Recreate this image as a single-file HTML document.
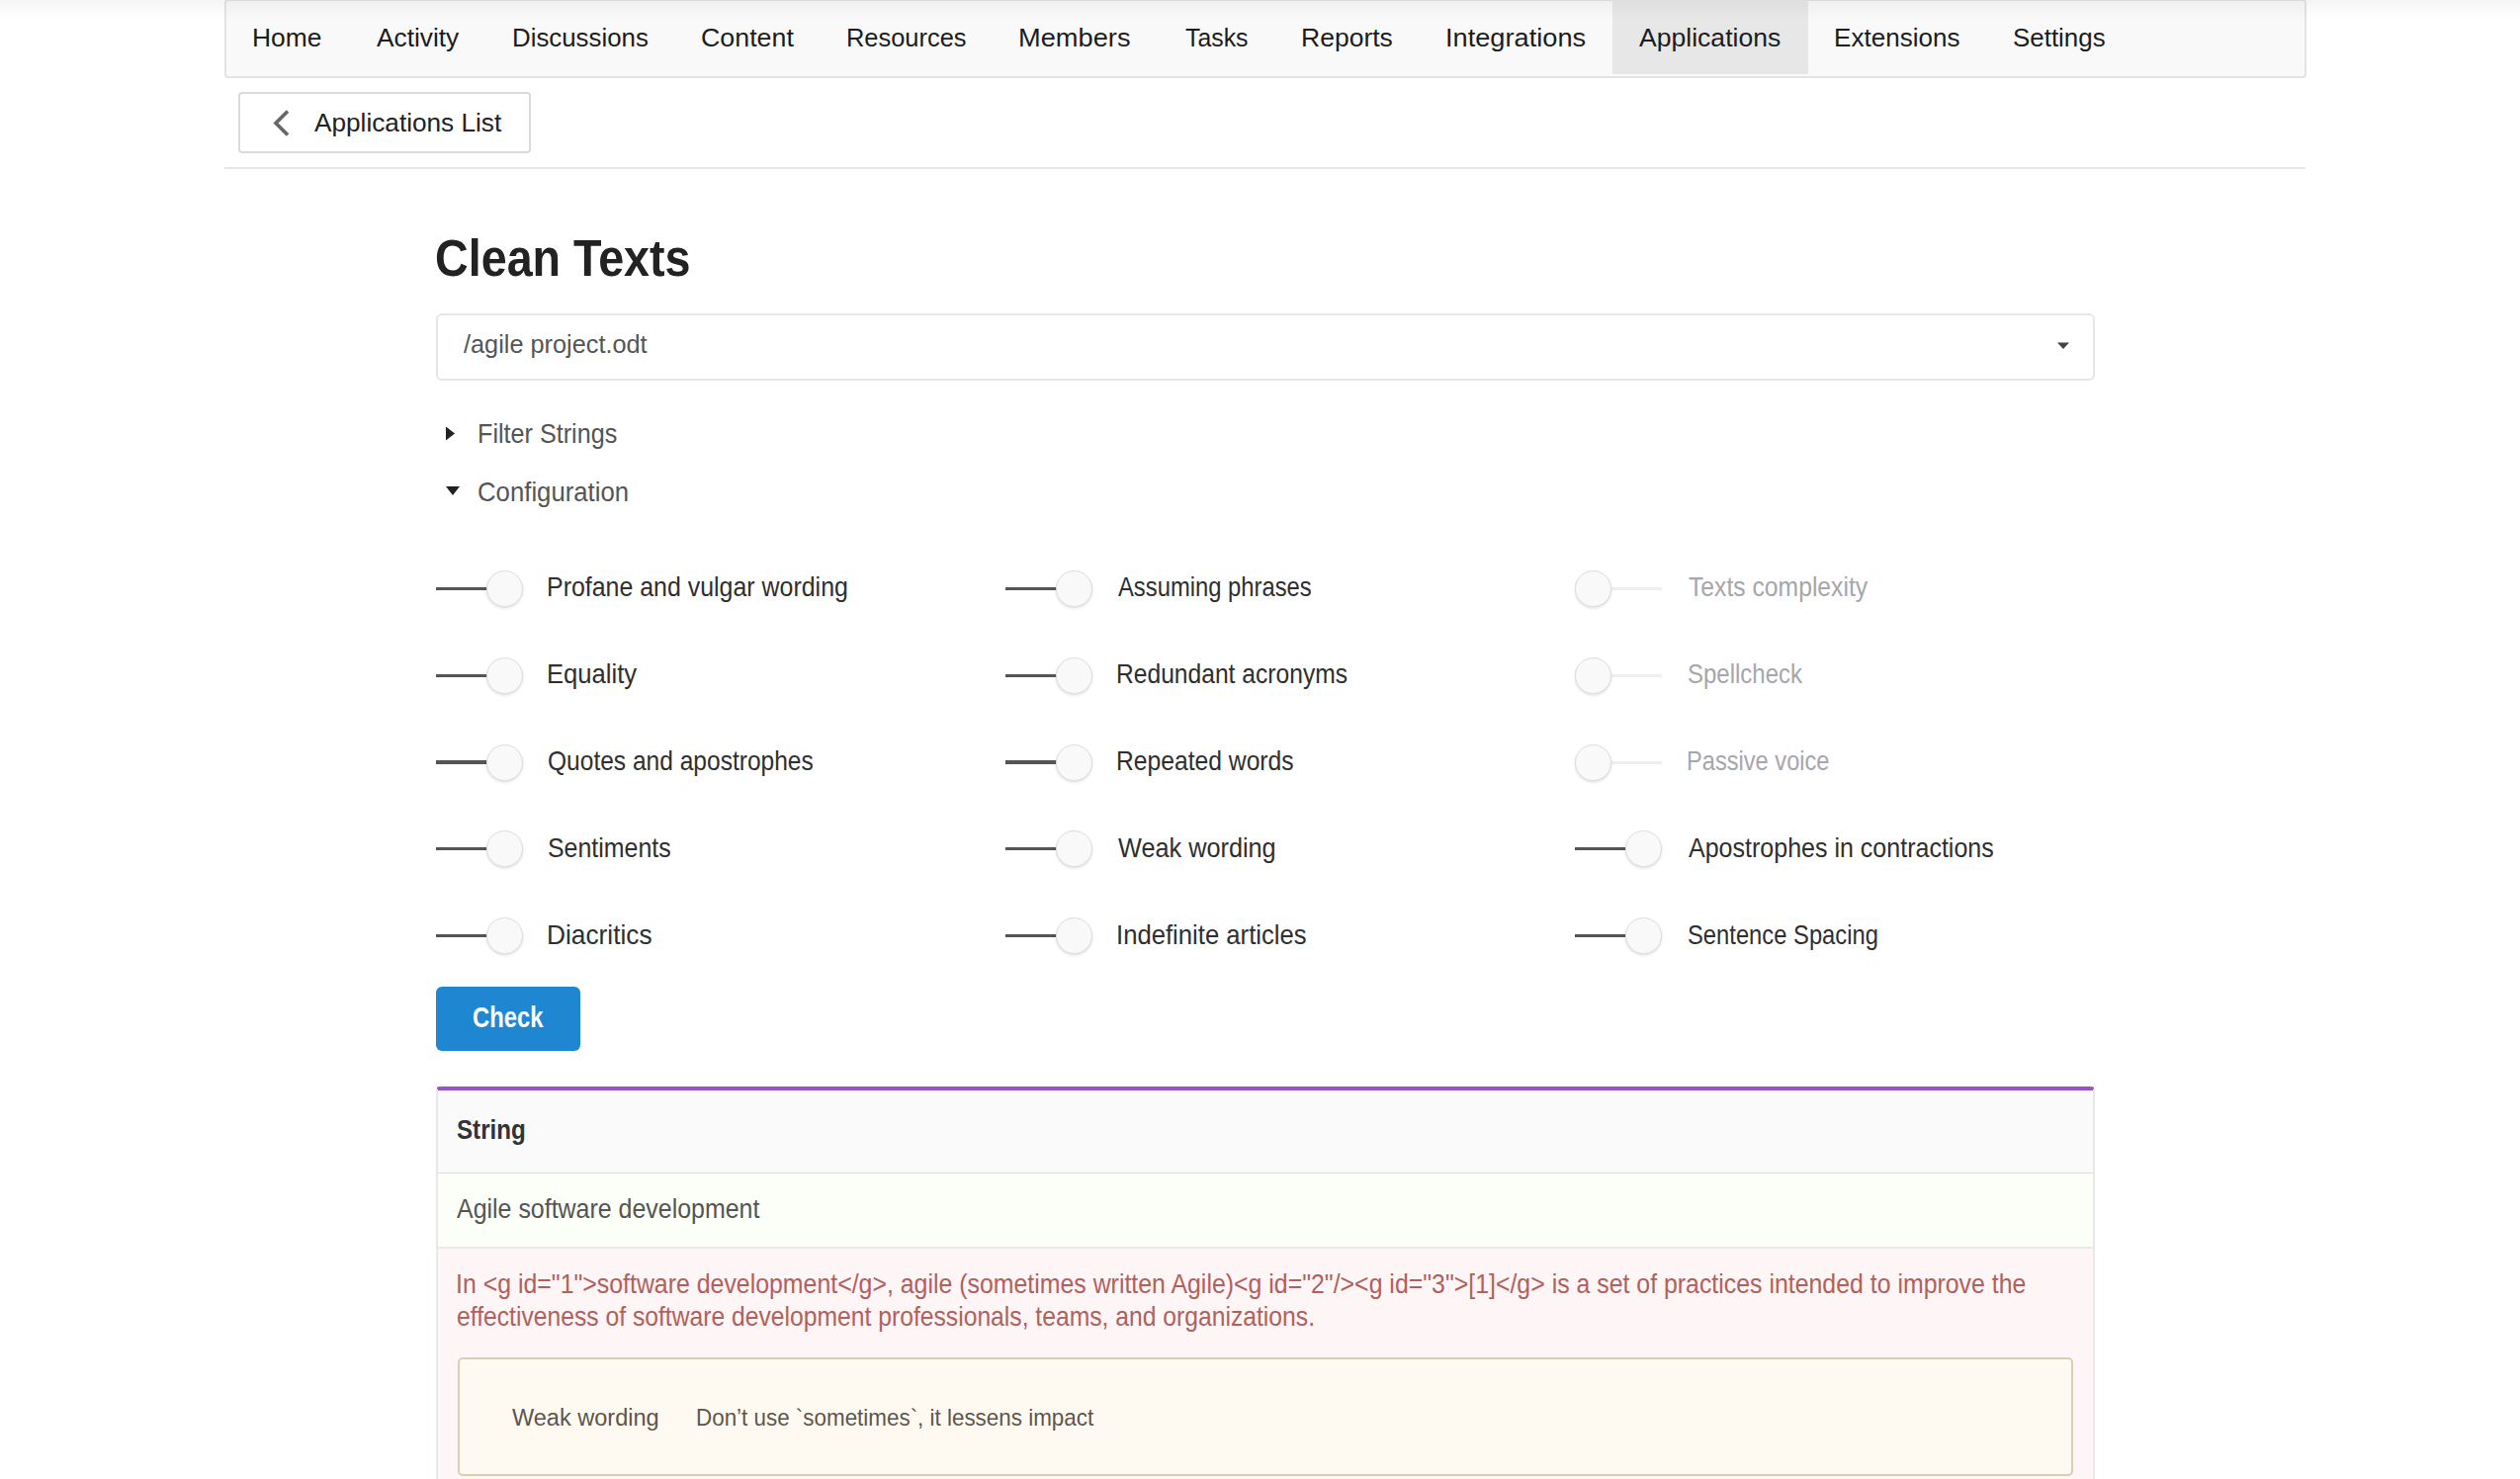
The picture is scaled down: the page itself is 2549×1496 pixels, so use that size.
<!DOCTYPE html>
<html><head><meta charset="utf-8"><style>
html,body{margin:0;padding:0;background:#fff;width:2549px;height:1496px;overflow:hidden;position:relative}
body{font-family:"Liberation Sans",sans-serif}
.t{position:absolute;white-space:nowrap;line-height:1;transform-origin:0 0}
.abs{position:absolute;box-sizing:border-box}
.topgrad{position:absolute;left:0;top:0;width:2549px;height:20px;background:linear-gradient(rgba(0,0,0,.04),rgba(0,0,0,0));z-index:5}
.nav{left:227px;top:-1px;width:2106px;height:80px;background:#f9f9f9;border:2px solid #e3e3e3;border-radius:4px}
.active{left:1631px;top:0;width:198px;height:75px;background:#e7e7e7}
.btn{left:241px;top:93px;width:296px;height:62px;border:2px solid #dadada;border-radius:4px;background:#fff}
.sep{left:227px;top:169px;width:2105px;height:2px;background:#e6e6e6}
.sel{left:441px;top:317px;width:1678px;height:68px;border:2px solid #e6e6e6;border-radius:6px;background:#fff}
.trk{position:absolute;height:3.4px}
.trk.on{background:#555}
.trk.off{background:#efefef;height:3px}
.knob{position:absolute;width:37px;height:37px;border-radius:50%;background:#f9f9f9;box-sizing:border-box;border:1px solid #dedede;box-shadow:0 1.5px 3px rgba(0,0,0,.13)}
.chk{left:441px;top:998px;width:146px;height:65px;background:#1f87d2;border-radius:6px}
.tbl{left:441px;top:1099px;width:1678px;height:420px;border:2px solid #e8e8ec;border-top:4px solid #9b52c3;border-radius:4px 4px 0 0;background:#fdf5f6}
.hdr{left:443px;top:1103px;width:1674px;height:84px;background:#fafafb;border-bottom:1px solid #dcdcdc}
.row1{left:443px;top:1187px;width:1674px;height:76px;background:#fcfef8;border-bottom:2px solid #ece9e6}
.inner{left:463px;top:1373px;width:1634px;height:120px;border:2px solid #d8cfb2;border-radius:5px;background:#fef9f1}
</style></head><body>
<div class="topgrad"></div>
<div class="abs nav"></div>
<div class="abs active"></div>
<div class="abs btn"></div>
<svg class="abs" style="left:270px;top:105px" width="30" height="40"><polyline points="21,7.5 9,19.5 21,31.5" fill="none" stroke="#666" stroke-width="3.6"/></svg>
<div class="abs sep"></div>
<div class="abs sel"></div>
<svg class="abs" style="left:2078px;top:343px" width="18" height="14"><polygon points="3,3.5 15,3.5 9,10" fill="#444"/></svg>
<svg class="abs" style="left:446px;top:428px" width="18" height="20"><polygon points="5,3.5 14,10.5 5,17.5" fill="#222"/></svg>
<svg class="abs" style="left:446px;top:487px" width="24" height="18"><polygon points="5,5 19,5 12,14" fill="#222"/></svg>
<div class="trk on" style="left:441px;top:594.0px;width:56px"></div>
<div class="knob" style="left:492.0px;top:577.1px"></div>
<div class="trk on" style="left:441px;top:681.7px;width:56px"></div>
<div class="knob" style="left:492.0px;top:664.8px"></div>
<div class="trk on" style="left:441px;top:769.4px;width:56px"></div>
<div class="knob" style="left:492.0px;top:752.5px"></div>
<div class="trk on" style="left:441px;top:857.0px;width:56px"></div>
<div class="knob" style="left:492.0px;top:840.1px"></div>
<div class="trk on" style="left:441px;top:944.7px;width:56px"></div>
<div class="knob" style="left:492.0px;top:927.8px"></div>
<div class="trk on" style="left:1017px;top:594.0px;width:56px"></div>
<div class="knob" style="left:1068.0px;top:577.1px"></div>
<div class="trk on" style="left:1017px;top:681.7px;width:56px"></div>
<div class="knob" style="left:1068.0px;top:664.8px"></div>
<div class="trk on" style="left:1017px;top:769.4px;width:56px"></div>
<div class="knob" style="left:1068.0px;top:752.5px"></div>
<div class="trk on" style="left:1017px;top:857.0px;width:56px"></div>
<div class="knob" style="left:1068.0px;top:840.1px"></div>
<div class="trk on" style="left:1017px;top:944.7px;width:56px"></div>
<div class="knob" style="left:1068.0px;top:927.8px"></div>
<div class="trk off" style="left:1625px;top:594.1px;width:56px"></div>
<div class="knob" style="left:1593.0px;top:577.1px"></div>
<div class="trk off" style="left:1625px;top:681.8px;width:56px"></div>
<div class="knob" style="left:1593.0px;top:664.8px"></div>
<div class="trk off" style="left:1625px;top:769.5px;width:56px"></div>
<div class="knob" style="left:1593.0px;top:752.5px"></div>
<div class="trk on" style="left:1593px;top:857.0px;width:56px"></div>
<div class="knob" style="left:1644.0px;top:840.1px"></div>
<div class="trk on" style="left:1593px;top:944.7px;width:56px"></div>
<div class="knob" style="left:1644.0px;top:927.8px"></div>
<div class="abs chk"></div>
<div class="abs tbl"></div>
<div class="abs hdr"></div>
<div class="abs row1"></div>
<div class="abs inner"></div>
<div class="t" style="left:254.94px;top:25.79px;font-size:25.65px;font-weight:normal;color:#1c1c1c;transform:scaleX(1.0303)">Home</div>
<div class="t" style="left:381.00px;top:25.79px;font-size:25.65px;font-weight:normal;color:#1c1c1c;transform:scaleX(1.0247)">Activity</div>
<div class="t" style="left:517.99px;top:25.79px;font-size:25.65px;font-weight:normal;color:#1c1c1c;transform:scaleX(1.0075)">Discussions</div>
<div class="t" style="left:708.96px;top:25.79px;font-size:25.65px;font-weight:normal;color:#1c1c1c;transform:scaleX(1.0449)">Content</div>
<div class="t" style="left:856.02px;top:25.79px;font-size:25.65px;font-weight:normal;color:#1c1c1c;transform:scaleX(0.9917)">Resources</div>
<div class="t" style="left:1030.38px;top:25.79px;font-size:25.65px;font-weight:normal;color:#1c1c1c;transform:scaleX(1.0625)">Members</div>
<div class="t" style="left:1199.00px;top:25.79px;font-size:25.65px;font-weight:normal;color:#1c1c1c;transform:scaleX(0.9692)">Tasks</div>
<div class="t" style="left:1315.93px;top:25.79px;font-size:25.65px;font-weight:normal;color:#1c1c1c;transform:scaleX(1.0345)">Reports</div>
<div class="t" style="left:1461.88px;top:25.79px;font-size:25.65px;font-weight:normal;color:#1c1c1c;transform:scaleX(1.0606)">Integrations</div>
<div class="t" style="left:1658.00px;top:25.79px;font-size:25.65px;font-weight:normal;color:#1c1c1c;transform:scaleX(1.0362)">Applications</div>
<div class="t" style="left:1854.97px;top:25.79px;font-size:25.65px;font-weight:normal;color:#1c1c1c;transform:scaleX(1.0163)">Extensions</div>
<div class="t" style="left:2035.99px;top:25.79px;font-size:25.65px;font-weight:normal;color:#1c1c1c;transform:scaleX(1.0110)">Settings</div>
<div class="t" style="left:318.00px;top:111.91px;font-size:25.51px;font-weight:normal;color:#222;transform:scaleX(1.0270)">Applications List</div>
<div class="t" style="left:440.19px;top:235.75px;font-size:51.45px;font-weight:bold;color:#222;transform:scaleX(0.9075)">Clean Texts</div>
<div class="t" style="left:469.00px;top:334.69px;font-size:26.00px;font-weight:normal;color:#555;transform:scaleX(0.9728)">/agile project.odt</div>
<div class="t" style="left:482.69px;top:424.85px;font-size:27.83px;font-weight:normal;color:#555;transform:scaleX(0.9045)">Filter Strings</div>
<div class="t" style="left:482.80px;top:482.73px;font-size:28.55px;font-weight:normal;color:#555;transform:scaleX(0.9018)">Configuration</div>
<div class="t" style="left:552.69px;top:579.69px;font-size:27.54px;font-weight:normal;color:#2f2f2f;transform:scaleX(0.9054)">Profane and vulgar wording</div>
<div class="t" style="left:552.64px;top:667.79px;font-size:27.54px;font-weight:normal;color:#2f2f2f;transform:scaleX(0.9302)">Equality</div>
<div class="t" style="left:553.61px;top:755.89px;font-size:27.54px;font-weight:normal;color:#2f2f2f;transform:scaleX(0.8913)">Quotes and apostrophes</div>
<div class="t" style="left:553.59px;top:843.99px;font-size:27.54px;font-weight:normal;color:#2f2f2f;transform:scaleX(0.9051)">Sentiments</div>
<div class="t" style="left:552.59px;top:932.09px;font-size:27.54px;font-weight:normal;color:#2f2f2f;transform:scaleX(0.9550)">Diacritics</div>
<div class="t" style="left:1131.20px;top:579.69px;font-size:27.54px;font-weight:normal;color:#2f2f2f;transform:scaleX(0.8642)">Assuming phrases</div>
<div class="t" style="left:1129.41px;top:667.79px;font-size:27.54px;font-weight:normal;color:#2f2f2f;transform:scaleX(0.8942)">Redundant acronyms</div>
<div class="t" style="left:1129.41px;top:755.89px;font-size:27.54px;font-weight:normal;color:#2f2f2f;transform:scaleX(0.8960)">Repeated words</div>
<div class="t" style="left:1131.20px;top:843.99px;font-size:27.54px;font-weight:normal;color:#2f2f2f;transform:scaleX(0.9179)">Weak wording</div>
<div class="t" style="left:1129.34px;top:932.09px;font-size:27.54px;font-weight:normal;color:#2f2f2f;transform:scaleX(0.9324)">Indefinite articles</div>
<div class="t" style="left:1707.80px;top:579.69px;font-size:27.54px;font-weight:normal;color:#a6a6ac;transform:scaleX(0.8970)">Texts complexity</div>
<div class="t" style="left:1706.93px;top:667.79px;font-size:27.54px;font-weight:normal;color:#a6a6ac;transform:scaleX(0.8712)">Spellcheck</div>
<div class="t" style="left:1706.08px;top:755.89px;font-size:27.54px;font-weight:normal;color:#a6a6ac;transform:scaleX(0.8584)">Passive voice</div>
<div class="t" style="left:1707.80px;top:843.99px;font-size:27.54px;font-weight:normal;color:#2f2f2f;transform:scaleX(0.9088)">Apostrophes in contractions</div>
<div class="t" style="left:1706.94px;top:932.09px;font-size:27.54px;font-weight:normal;color:#2f2f2f;transform:scaleX(0.8633)">Sentence Spacing</div>
<div class="t" style="left:477.77px;top:1015.11px;font-size:28.70px;font-weight:bold;color:#fff;transform:scaleX(0.8294)">Check</div>
<div class="t" style="left:461.61px;top:1129.34px;font-size:27.25px;font-weight:bold;color:#333;transform:scaleX(0.8868)">String</div>
<div class="t" style="left:462.20px;top:1209.26px;font-size:27.10px;font-weight:normal;color:#555;transform:scaleX(0.9206)">Agile software development</div>
<div class="t" style="left:460.59px;top:1285.29px;font-size:27.54px;font-weight:normal;color:#b3605b;transform:scaleX(0.9034)">In &lt;g id=&quot;1&quot;&gt;software development&lt;/g&gt;, agile (sometimes written Agile)&lt;g id=&quot;2&quot;/&gt;&lt;g id=&quot;3&quot;&gt;[1]&lt;/g&gt; is a set of practices intended to improve the</div>
<div class="t" style="left:461.50px;top:1318.09px;font-size:27.54px;font-weight:normal;color:#b3605b;transform:scaleX(0.8965)">effectiveness of software development professionals, teams, and organizations.</div>
<div class="t" style="left:517.50px;top:1423.10px;font-size:23.62px;font-weight:normal;color:#5e554c;transform:scaleX(0.9966)">Weak wording</div>
<div class="t" style="left:704.07px;top:1423.47px;font-size:23.19px;font-weight:normal;color:#5e554c;transform:scaleX(0.9662)">Don’t use `sometimes`, it lessens impact</div>
</body></html>
